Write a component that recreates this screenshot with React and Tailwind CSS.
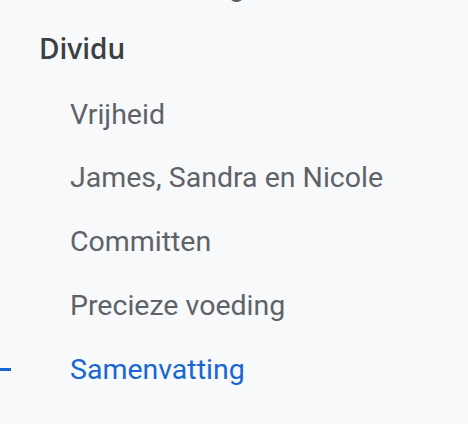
import React from "react";

const items = [
  { label: "Vrijheid" },
  { label: "James, Sandra en Nicole" },
  { label: "Committen" },
  { label: "Precieze voeding" },
  { label: "Samenvatting", active: true },
];

function Row({ label, active }) {
  return (
    <div className="flex items-center h-[63.75px]">
      <div className="w-[70px] shrink-0 flex items-center">
        {active && <div className="w-[11px] h-[3px] bg-[#1967d2]" />}
      </div>
      <span
        className={
          "text-[28.5px] leading-[63.75px] whitespace-nowrap " +
          (active ? "text-[#1967d2]" : "text-[#5f6368]")
        }
        style={{ fontFamily: "Roboto, sans-serif" }}
      >
        {label}
      </span>
    </div>
  );
}

export default function App() {
  return (
    <div className="w-[468px] h-[424px] bg-[#f8f9fa] overflow-hidden">
      <div className="-mt-[45px] flex flex-col">
        <div className="flex items-center h-[63.75px] pl-[70px]">
          <span
            className="text-[28.5px] leading-[63.75px] text-[#5f6368] whitespace-nowrap"
            style={{ fontFamily: "Roboto, sans-serif" }}
          >
            Samenvatting
          </span>
        </div>
        <div className="flex items-center h-[63.75px] pl-[39px]">
          <span
            className="text-[28px] leading-[55px] mb-[4px] font-semibold text-[#3c4043] whitespace-nowrap"
            style={{ fontFamily: "'Open Sans', sans-serif" }}
          >
            Dividu
          </span>
        </div>
        {items.map((it) => (
          <Row key={it.label} {...it} />
        ))}
      </div>
    </div>
  );
}
